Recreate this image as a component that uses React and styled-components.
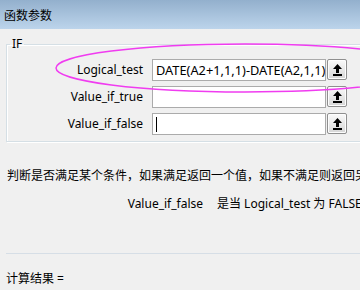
import React from "react";
import styled, { createGlobalStyle } from "styled-components";

const GlobalStyle = createGlobalStyle`
  html, body {
    margin: 0;
    padding: 0;
    background: #f0f0f0;
  }
  body {
    font-family: "Noto Sans", "Noto Sans CJK SC", sans-serif;
    font-size: 12px;
    color: #000;
  }
`;

const Dialog = styled.div`
  position: relative;
  width: 360px;
  height: 290px;
  overflow: hidden;
  background: #f0f0f0;
`;

const TitleBar = styled.div`
  height: 29px;
  display: flex;
  align-items: center;
  padding-left: 4px;
  background: linear-gradient(to bottom, #93b0cd, #bcd4eb);
  font-size: 12px;
  line-height: 1;
  padding-top: 2px;
  box-sizing: border-box;
`;

const Body = styled.div`
  padding-top: 8px;
`;

const Group = styled.fieldset`
  margin: 0 0 0 6px;
  width: 380px;
  padding: 8px 0 6px 0;
  border: 1px solid #d5dfe5;
  box-shadow: inset 1px 1px 0 #fff, 1px 1px 0 #fff;
  box-sizing: border-box;
`;

const Legend = styled.legend`
  margin-left: 3px;
  padding: 0 2px;
  font-size: 12px;
  line-height: 14px;
`;

const Rows = styled.div`
  display: grid;
  grid-template-columns: 145px 174px 21px;
  row-gap: 5px;
`;

const Label = styled.div`
  text-align: right;
  padding-right: 9px;
  height: 22px;
  line-height: 22px;
  white-space: nowrap;
`;

const Field = styled.div`
  height: 22px;
  box-sizing: border-box;
  border: 1px solid #ababab;
  background: #fff;
  padding: 0 3px;
  line-height: 19px;
  white-space: nowrap;
  overflow: hidden;
  display: flex;
  align-items: center;
  font-size: 12.8px;
`;

const Caret = styled.span`
  display: inline-block;
  width: 1px;
  height: 15px;
  background: #000;
`;

const RefButton = styled.div`
  margin-left: 1px;
  width: 20px;
  height: 21px;
  box-sizing: border-box;
  border: 1px solid #8f8f8f;
  border-radius: 2px;
  background: linear-gradient(to bottom, #fafafa, #e6e6e6 55%, #d6d6d6);
  box-shadow: inset 0 0 0 1px #fdfdfd;
  display: flex;
  align-items: center;
  justify-content: center;
`;

const Desc = styled.div`
  margin-top: 25px;
  padding-left: 7px;
  line-height: 18px;
  white-space: nowrap;
`;

const ArgHelp = styled.div`
  margin-top: 10px;
  display: flex;
  line-height: 18px;
  white-space: nowrap;
`;

const ArgName = styled.span`
  width: 203px;
  flex: none;
  text-align: right;
  padding-right: 14px;
  box-sizing: content-box;
`;

const Separator = styled.div`
  margin: 40px 0 0 6px;
  height: 1px;
  background: #d6dee6;
`;

const Result = styled.div`
  margin-top: 16px;
  padding-left: 6px;
  line-height: 18px;
`;

const Marker = styled.svg`
  position: absolute;
  left: 0;
  top: 0;
  pointer-events: none;
`;

const ArrowIcon = () => (
  <svg width="9" height="12" viewBox="0 0 9 12">
    <path d="M4.5 0 L9 5 H6 V9 H3 V5 H0 Z" fill="#000" />
    <rect x="0" y="10" width="9" height="2" fill="#000" />
  </svg>
);

const args = [
  { name: "Logical_test", value: "DATE(A2+1,1,1)-DATE(A2,1,1)" },
  { name: "Value_if_true", value: "" },
  { name: "Value_if_false", value: "", focused: true },
];

export default function App() {
  return (
    <>
      <GlobalStyle />
      <Dialog>
        <TitleBar>函数参数</TitleBar>
        <Body>
          <Group>
            <Legend>IF</Legend>
            <Rows>
              {args.map((a) => (
                <React.Fragment key={a.name}>
                  <Label>{a.name}</Label>
                  <Field>
                    {a.value}
                    {a.focused && <Caret />}
                  </Field>
                  <RefButton>
                    <ArrowIcon />
                  </RefButton>
                </React.Fragment>
              ))}
            </Rows>
          </Group>
          <Desc>判断是否满足某个条件，如果满足返回一个值，如果不满足则返回另一个值。</Desc>
          <ArgHelp>
            <ArgName>Value_if_false</ArgName>
            <span>是当 Logical_test 为 FALSE 时的返回值。如果忽略，则返回 FALSE</span>
          </ArgHelp>
          <Separator />
          <Result>计算结果 =</Result>
        </Body>
        <Marker width="360" height="290">
          <ellipse
            cx="245"
            cy="68"
            rx="189"
            ry="24"
            fill="none"
            stroke="#f03cf0"
            strokeWidth="1.5"
          />
        </Marker>
      </Dialog>
    </>
  );
}
